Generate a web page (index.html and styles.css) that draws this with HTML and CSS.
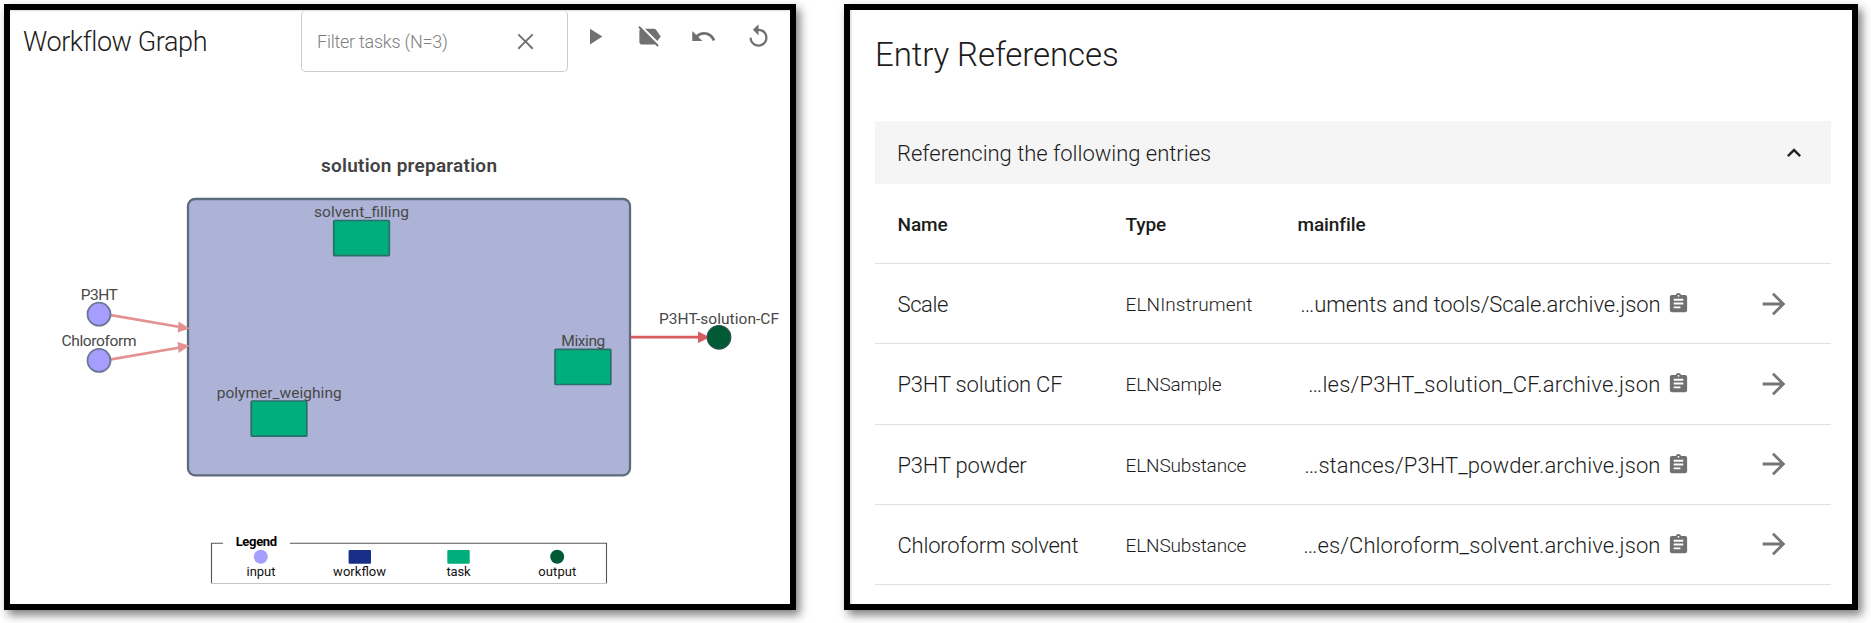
FILE: index.html
```html
<!DOCTYPE html>
<html lang="en">
<head>
<meta charset="utf-8">
<title>Workflow Graph</title>
<link rel="stylesheet" href="styles.css">
</head>
<body>
<svg class="defs" aria-hidden="true">
  <symbol id="clip" viewBox="0 0 24 24"><path d="M19 3h-4.18C14.4 1.84 13.3 1 12 1c-1.3 0-2.4.84-2.82 2H5c-1.1 0-2 .9-2 2v14c0 1.1.9 2 2 2h14c1.1 0 2-.9 2-2V5c0-1.1-.9-2-2-2zm-7 0c.55 0 1 .45 1 1s-.45 1-1 1-1-.45-1-1 .45-1 1-1zm2 14H7v-2h7v2zm3-4H7v-2h10v2zm0-4H7V7h10v2z"/></symbol>
  <symbol id="arrow" viewBox="0 0 24 24"><path d="M12 4l-1.41 1.41L16.17 11H4v2h12.17l-5.58 5.59L12 20l8-8z"/></symbol>
</svg>
<main class="page">
  <section class="panel workflow">
    <header class="toolbar">
      <h1 class="title">Workflow Graph</h1>
      <div class="filter">
        <span class="placeholder">Filter tasks (N=3)</span>
        <svg class="icon" viewBox="0 0 24 24"><path d="M19 6.2 17.8 5 12 10.8 6.2 5 5 6.2 10.8 12 5 17.8 6.2 19 12 13.2 17.8 19 19 17.8 13.2 12z"/></svg>
      </div>
      <nav class="actions">
        <svg class="icon" viewBox="0 0 24 24"><path d="M8 5v14l11-7z"/></svg>
        <svg class="icon" viewBox="0 0 24 24"><path d="M3.25 2.75l17 17L19 21l-2-2H5c-1.1 0-2-.9-2-2V7c0-.55.23-1.05.59-1.41L2 4l1.25-1.25zM22 12l-4.37-6.16C17.27 5.33 16.67 5 16 5H8l11 11 3-4z"/></svg>
        <svg class="icon" viewBox="0 0 24 24"><path d="M12.5 8c-2.65 0-5.05.99-6.9 2.6L2 7v9h9l-3.62-3.62c1.39-1.16 3.16-1.88 5.12-1.88 3.54 0 6.55 2.31 7.6 5.5l2.37-.78C21.08 11.03 17.15 8 12.5 8z"/></svg>
        <svg class="icon" viewBox="0 0 24 24"><path d="M12 5V1L7 6l5 5V7c3.31 0 6 2.69 6 6s-2.69 6-6 6-6-2.69-6-6H4c0 4.42 3.58 8 8 8s8-3.58 8-8-3.58-8-8-8z"/></svg>
      </nav>
    </header>
    <svg class="graph" viewBox="10 74 780 530">
      <text class="graph-title" x="409" y="171.5" textLength="176">solution preparation</text>
      <rect class="group" x="188" y="199" width="442" height="276.3" rx="7"/>
      <g class="edge">
        <path d="M111 315.2 180 327M111 359.3 180 347.5"/>
        <path class="head" d="M178.6 321.5 189.6 328.5 177.6 332.5zM177.6 342 189.6 345.7 178.6 353z"/>
      </g>
      <g class="edge strong">
        <path d="M631 337.2H699"/>
        <path class="head" d="M698 331.5 710 337.2 698 343z"/>
      </g>
      <rect class="task" x="333.7" y="220.5" width="55.6" height="35.2" rx="1"/>
      <rect class="task" x="555" y="349.3" width="55.8" height="35.2" rx="1"/>
      <rect class="task" x="251.2" y="401" width="55.6" height="35.2" rx="1"/>
      <circle class="input" cx="99" cy="314.2" r="11.5"/>
      <circle class="input" cx="99" cy="360.4" r="11.5"/>
      <circle class="output" cx="719" cy="337.3" r="11.8"/>
      <g class="label">
        <text x="361.5" y="217.3" textLength="95">solvent_filling</text>
        <text x="583.3" y="346" textLength="44">Mixing</text>
        <text x="279.2" y="398" textLength="125">polymer_weighing</text>
        <text x="99.3" y="300.3" textLength="37">P3HT</text>
        <text x="99" y="346.3" textLength="75">Chloroform</text>
        <text x="719" y="323.7" textLength="120">P3HT-solution-CF</text>
      </g>
      <path class="legend-box" d="M223 543.2H211.5V583.5M290 543.2H606.5V583.5"/>
      <path class="legend-base" d="M211 583.5H607"/>
      <circle cx="260.8" cy="556.8" r="7" fill="#a59eff"/>
      <rect x="348.6" y="550" width="22.4" height="13.8" rx="1" fill="#192e86"/>
      <rect x="447.3" y="550" width="22.4" height="13.8" rx="1" fill="#00ad7c"/>
      <circle cx="557.2" cy="556.8" r="7" fill="#005a36"/>
      <g class="legend">
        <text class="bold" x="256.4" y="546" textLength="41.5">Legend</text>
        <text x="261" y="576.2" textLength="29">input</text>
        <text x="359.6" y="576.2" textLength="53">workflow</text>
        <text x="458.5" y="576.2" textLength="24">task</text>
        <text x="557.3" y="576.2" textLength="38">output</text>
      </g>
    </svg>
  </section>

  <section class="panel references">
    <h1 class="title large">Entry References</h1>
    <div class="accordion">
      <span>Referencing the following entries</span>
      <svg class="chevron" viewBox="0 0 24 24"><path d="M12 8l-6 6 1.41 1.41L12 10.83l4.59 4.58L18 14z"/></svg>
    </div>
    <div class="row head-row"><span>Name</span><span>Type</span><span>mainfile</span></div>
    <div class="row"><span class="name scale">Scale</span><span class="type t1">ELNInstrument</span><span class="file f1">…uments and tools/Scale.archive.json</span><svg class="clip"><use href="#clip"/></svg><svg class="go"><use href="#arrow"/></svg></div>
    <div class="row"><span class="name">P3HT solution CF</span><span class="type">ELNSample</span><span class="file f2">…les/P3HT_solution_CF.archive.json</span><svg class="clip"><use href="#clip"/></svg><svg class="go"><use href="#arrow"/></svg></div>
    <div class="row"><span class="name">P3HT powder</span><span class="type">ELNSubstance</span><span class="file f3">…stances/P3HT_powder.archive.json</span><svg class="clip"><use href="#clip"/></svg><svg class="go"><use href="#arrow"/></svg></div>
    <div class="row"><span class="name">Chloroform solvent</span><span class="type">ELNSubstance</span><span class="file f4">…es/Chloroform_solvent.archive.json</span><svg class="clip"><use href="#clip"/></svg><svg class="go"><use href="#arrow"/></svg></div>
  </section>
</main>
</body>
</html>
```
FILE: styles.css
```css
* { box-sizing: border-box; }
body { margin: 0; background: #fff; color: #1c1c1c; font-family: Roboto, "Liberation Sans", sans-serif; font-weight: 300; overflow: hidden; }
.defs { display: none; }
.page { display: flex; gap: 48px; width: 1871px; height: 623px; padding: 4px; align-items: flex-start; }
.panel { height: 606px; border: 6px solid #000; background: #fff; box-shadow: 4px 5px 9px rgba(0, 0, 0, .5); overflow: hidden; flex: none; }
.workflow { width: 792px; }
.references { width: 1014px; padding: 0 21px 0 25px; position: relative; }
.references::before { content: ""; position: absolute; left: 0; top: 0; bottom: 0; width: 2px; background: #e6e6e6; }
.title { margin: 0; font-size: 27px; font-weight: 300; letter-spacing: -.4px; line-height: 32px; white-space: nowrap; }

.toolbar { display: flex; height: 64px; padding-left: 13px; align-items: flex-start; box-shadow: inset 0 2px 2px -1px #ddd; }
.toolbar .title { width: 278px; padding-top: 16px; }
.filter { display: flex; justify-content: space-between; align-items: center; width: 267px; height: 62px; padding: 0 28px 0 15px; border: 1px solid #ccc; border-top-color: #e4e4e4; border-radius: 5px; }
.placeholder { color: #808080; font-size: 18px; letter-spacing: -.25px; line-height: 24px; padding-top: 1px; }
.icon { width: 27px; height: 27px; fill: #707070; flex: none; }
.actions { display: flex; gap: 27.4px; padding: 13.2px 0 0 13.4px; }

.graph { display: block; width: 780px; height: 530px; }
.graph text { text-anchor: middle; }
.graph-title { font-size: 19px; font-weight: 600; fill: #424242; }
.group { fill: #adb3d6; stroke: #5d6b7e; stroke-width: 2.3; }
.task { fill: #00ad7c; stroke: #2a6f69; stroke-width: 1.7; }
.input { fill: #a59eff; stroke: #6c7793; stroke-width: 1.8; }
.output { fill: #005a36; stroke: #2c5350; stroke-width: 1.2; }
.edge path { stroke: #e39191; stroke-width: 2.7; fill: none; }
.edge .head { fill: #e39191; stroke: none; }
.edge.strong path { stroke: #d65c60; }
.edge.strong .head { fill: #d65c60; stroke: none; }
.label { font-size: 15.5px; font-weight: 400; fill: #484848; }
.legend { font-size: 13px; font-weight: 400; fill: #111; }
.legend .bold { font-weight: 700; fill: #000; }
.legend-box { fill: none; stroke: #555; stroke-width: 1.1; }
.legend-base { stroke: #c4c4c4; stroke-width: 1; }

.title.large { font-size: 33px; letter-spacing: -.1px; line-height: 40px; height: 111px; padding-top: 25px; }
.accordion { display: flex; align-items: center; justify-content: space-between; height: 63px; padding: 0 23.2px 0 22px; background: #f5f5f5; font-size: 22px; letter-spacing: -.02px; }
.accordion span { padding-top: 2px; }
.chevron { width: 28px; height: 28px; fill: #222; }
.row { display: grid; grid-template-columns: 228px 172px 363px 37px 1fr; align-items: center; height: 80.25px; padding-left: 22.5px; border-bottom: 1px solid #e0e0e0; }
.row span { padding-top: 2px; }
.head-row { height: 80px; font-size: 19px; font-weight: 500; letter-spacing: -.1px; }
.name { font-size: 22px; letter-spacing: -.2px; }
.scale { letter-spacing: -.4px; }
.type { font-size: 19px; letter-spacing: -.15px; }
.t1 { letter-spacing: .1px; }
.file { font-size: 22px; text-align: right; white-space: nowrap; }
.f1 { letter-spacing: -.09px; }
.f2 { letter-spacing: .22px; }
.f3 { letter-spacing: .08px; }
.f4 { letter-spacing: .08px; }
.clip { width: 23px; height: 23px; margin-left: 6px; fill: #707070; }
.go { width: 34px; height: 34px; margin-left: 59.5px; fill: #757575; }
```
